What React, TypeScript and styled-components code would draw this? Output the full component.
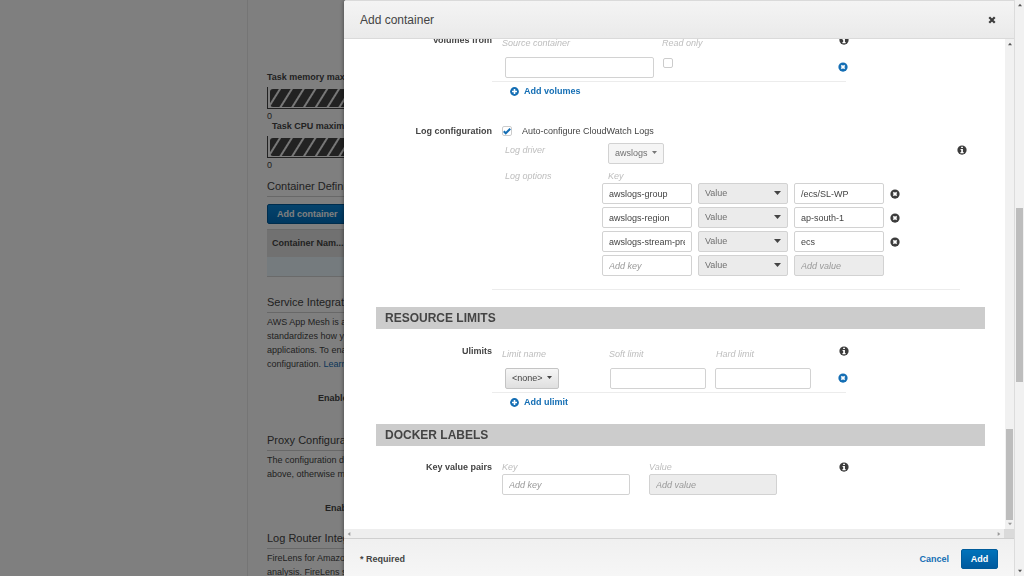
import React from "react";
import styled, { createGlobalStyle, css } from "styled-components";

const GlobalStyle = createGlobalStyle`
  *, *::before, *::after { box-sizing: border-box; }
  body {
    margin: 0;
    background: #fff;
    color: #444;
    font: 9px/14px "Liberation Sans", Arial, sans-serif;
  }
  button, input, select { font: inherit; color: inherit; margin: 0; }
  h1, h2, h3, p { margin: 0; font-weight: normal; }
`;

/* ---------- Page behind the dialog ---------- */

const Page = styled.div`
  display: flex;
  height: 100vh;
  overflow: hidden;
`;

const SideNav = styled.nav`
  flex: 0 0 248px;
  border-right: 1px solid #ebebeb;
`;

const Main = styled.main`
  flex: 1;
  min-width: 0;
  padding: 70px 40px 0 19px;
  white-space: nowrap;
`;

const MeterTitle = styled.div<{ $inset?: boolean }>`
  font-weight: bold;
  padding-left: ${(p) => (p.$inset ? 5 : 0)}px;
`;

const Meter = styled.div`
  height: 22px;
  margin-top: 3px;
  padding: 2px 2px 1px;
  border: solid #444;
  border-width: 0 0 1px 1px;
`;

const MeterFill = styled.div`
  height: 18px;
  border-radius: 3px;
  background: repeating-linear-gradient(122deg, #444 0 7px, #eee 8px 9px, #444 10px);
`;

const MeterScale = styled.div`
  height: 10px;
  line-height: 14px;
`;

const SectionTitle = styled.h2<{ $top: number }>`
  margin-top: ${(p) => p.$top}px;
  padding-bottom: 2px;
  border-bottom: 1px solid #d0d0d0;
  font-size: 11px;
  line-height: 16px;
`;

const Copy = styled.p`
  margin-top: 2px;
`;

const Anchor = styled.a`
  color: #146eb4;
  text-decoration: none;
`;

const EnableLabel = styled.div<{ $indent: number }>`
  margin-top: 20px;
  padding-left: ${(p) => p.$indent}px;
  font-weight: bold;
`;

const blueButton = css`
  height: 20px;
  border: 1px solid #005b9a;
  border-radius: 2px;
  background: linear-gradient(#0073bb, #005a9e);
  color: #fff;
  font-weight: bold;
  line-height: 14px;
  white-space: nowrap;
`;

const AddContainerButton = styled.button`
  ${blueButton}
  display: block;
  margin: 7px 0 5px;
  padding: 0 9px;
  background: linear-gradient(#0a86d8, #0070c0);
`;

const ContainerTable = styled.table`
  width: 100%;
  border-collapse: collapse;
  border: solid #d5d5d5;
  border-width: 1px 0;

  th {
    height: 27px;
    padding: 0 5px;
    background: #e2e2e2;
    text-align: left;
  }
  td {
    height: 20px;
    padding: 0;
    background: #eaf6fc;
  }
`;

/* ---------- Dialog shell ---------- */

const Backdrop = styled.div`
  position: fixed;
  inset: 0;
  display: flex;
  background: rgba(0, 0, 0, 0.5);
`;

const Dialog = styled.section`
  flex: 1;
  min-width: 0;
  margin-left: 344px;
  display: flex;
  flex-direction: column;
  background: #fff;
  border-radius: 3px 0 0 0;
  box-shadow: 0 0 4px rgba(0, 0, 0, 0.5);
  overflow: hidden;
`;

const DialogHeader = styled.header`
  flex: 0 0 39px;
  display: flex;
  align-items: center;
  justify-content: space-between;
  padding: 1px 18px 0 16px;
  border: solid #dadada;
  border-width: 1px 0;
  background: linear-gradient(#f4f4f4, #eaeaea);
`;

const DialogTitle = styled.h1`
  font-size: 12px;
  line-height: 16px;
`;

const IconButton = styled.button<{ $tone?: "blue" }>`
  display: flex;
  padding: 0;
  border: 0;
  background: none;
  color: ${(p) => (p.$tone === "blue" ? "#146eb4" : "#3c3c3c")};
`;

const DialogMiddle = styled.div`
  flex: 1;
  min-height: 0;
  display: flex;
`;

const ScrollArea = styled.div`
  flex: 1;
  min-width: 0;
  display: flex;
  flex-direction: column;
  justify-content: flex-end;
  padding: 0 20px 0 32px;
  overflow: hidden;
`;

const DialogFooter = styled.footer`
  flex: 0 0 38px;
  display: flex;
  align-items: center;
  gap: 12px;
  padding: 3px 16px 0;
  border-top: 1px solid #cfcfcf;
  background: linear-gradient(#f0f0f0, #f6f6f6);
`;

const Required = styled.strong`
  flex: 1;
`;

const CancelButton = styled.button`
  padding: 0;
  border: 0;
  background: none;
  color: #146eb4;
  font-weight: bold;
`;

const AddButton = styled.button`
  ${blueButton}
  width: 37px;
  padding: 0;
`;

/* ---------- Scrollbars ---------- */

const VerticalTrack = styled.div<{ $edge?: boolean }>`
  flex: 0 0 ${(p) => (p.$edge ? 10 : 9)}px;
  display: flex;
  flex-direction: column;
  align-items: center;
  padding: 3px 0;
  background: #f1f1f1;
  border-left: ${(p) => (p.$edge ? "1px solid #dcdcdc" : "0")};
`;

const Thumb = styled.div<{ $grow: number }>`
  flex: ${(p) => p.$grow} 0 0;
  width: 7px;
  background: #bdbdbd;
`;

const Gap = styled.div<{ $grow: number }>`
  flex: ${(p) => p.$grow} 0 0;
`;

const HorizontalTrack = styled.div`
  flex: 0 0 9px;
  display: flex;
  align-items: center;
  justify-content: space-between;
  background: #eee;
`;

const TrackEnd = styled.div`
  display: flex;
  align-items: center;
  gap: 3px;
  height: 9px;
  padding-left: 3px;
`;

const Corner = styled.div`
  width: 10px;
  height: 9px;
  background: #dadada;
`;

/* ---------- Form parts ---------- */

const FormRow = styled.div<{ $top?: number; $bottom: number }>`
  display: flex;
  padding: ${(p) => p.$top ?? 0}px 0 ${(p) => p.$bottom}px;
`;

const RowLabel = styled.div`
  flex: 0 0 116px;
  text-align: right;
  font-weight: bold;
  white-space: nowrap;
`;

const RowBody = styled.div<{ $wide?: boolean }>`
  flex: 0 1 ${(p) => (p.$wide ? 475 : 357)}px;
`;

const GroupTitle = styled.h2`
  height: 22px;
  padding-left: 9px;
  background: #ccc;
  font-size: 12px;
  font-weight: bold;
  line-height: 22px;
`;

const HintRow = styled.div<{ $columns: string }>`
  display: grid;
  grid-template-columns: ${(p) => p.$columns};
  height: 17px;
  padding-left: 10px;
`;

const Hint = styled.span<{ $drop?: boolean }>`
  padding-top: ${(p) => (p.$drop ? 3 : 0)}px;
  color: #bdbdbd;
  font-style: italic;
`;

const InfoSlot = styled.span`
  display: flex;
  justify-self: end;
  height: 14px;
  align-items: center;
`;

const InputRow = styled.div<{ $columns: string }>`
  display: grid;
  grid-template-columns: ${(p) => p.$columns};
  margin-top: 7px;
  padding: 0 1px 0 13px;
`;

const ReadOnlyCell = styled.span`
  padding: 1px 0 0 9px;
`;

const RemoveSlot = styled.span`
  justify-self: end;
  padding-top: 5px;
`;

const TextInput = styled.input`
  width: 100%;
  height: 21px;
  padding: 0 6px;
  border: 1px solid #d2d2d2;
  border-radius: 2px;
  background: #fff;
  outline: 0;

  &::placeholder { color: #999; font-style: italic; opacity: 1; }
  &:disabled { background: #ececec; }
`;

const Rule = styled.hr<{ $top: number; $right?: number }>`
  height: 1px;
  margin: ${(p) => p.$top}px ${(p) => p.$right ?? 3}px 0 0;
  border: 0;
  background: #ececec;
`;

const AddLink = styled.button`
  display: flex;
  align-items: center;
  gap: 5px;
  height: 14px;
  margin: 2px 0 0 18px;
  padding: 0;
  border: 0;
  background: none;
  color: #146eb4;
  font-weight: bold;
`;

const CheckWrap = styled.span`
  position: relative;
  display: flex;
  width: 10px;
  height: 10px;

  svg { position: absolute; left: 1px; top: 1px; pointer-events: none; }
`;

const Check = styled.input`
  appearance: none;
  width: 10px;
  height: 10px;
  border: 1px solid #ccc;
  border-radius: 2px;
  background: #fff;
`;

const CheckLine = styled.label`
  display: flex;
  align-items: center;
  gap: 10px;
  height: 14px;
  padding-left: 10px;
`;

const SelectWrap = styled.span<{ $width: number }>`
  position: relative;
  display: block;
  width: ${(p) => p.$width}px;

  svg {
    position: absolute;
    right: 7px;
    top: 8px;
    pointer-events: none;
  }
`;

const Select = styled.select<{ $look: "flat" | "raised" | "muted" }>`
  appearance: none;
  display: block;
  width: 100%;
  height: 21px;
  padding: 0 6px 2px;
  border: 1px solid ${(p) => (p.$look === "raised" ? "#c4c4c4" : "#d2d2d2")};
  border-radius: 2px;
  background: ${(p) =>
    p.$look === "flat" ? "#ebebeb" : p.$look === "raised" ? "linear-gradient(#f6f6f6, #dfdfdf)" : "#f5f5f5"};
  color: ${(p) => (p.$look === "raised" ? "#444" : "#707070")};
  opacity: 1;
`;

const DriverLine = styled.div`
  display: grid;
  grid-template-columns: 103px 1fr auto;
  align-items: start;
  margin-top: 5px;
  padding-left: 13px;
`;

const OptionsLine = styled.div`
  display: grid;
  grid-template-columns: 97px 1fr;
  margin-top: 5px;
  padding-left: 13px;
`;

const KeyHint = styled(Hint)`
  display: block;
  padding-left: 6px;
`;

const OptionRow = styled.div`
  display: grid;
  grid-template-columns: 90px 90px 90px 10px;
  column-gap: 6px;
  align-items: center;
  margin-bottom: 3px;
`;

const PairFields = styled.div`
  display: grid;
  grid-template-columns: 128px 128px 1fr;
  column-gap: 19px;
  padding-left: 10px;
`;

const PairField = styled.label`
  display: flex;
  flex-direction: column;
`;

/* ---------- Icons ---------- */

const InfoIcon = () => (
  <svg width="10" height="10" viewBox="0 0 16 16" aria-hidden="true">
    <circle cx="8" cy="8" r="7.4" fill="#3c3c3c" />
    <path d="M6.6 2.6h2.9v2.3H6.6zM5.7 6.3h3.8v5h1.1v1.8H5.5v-1.8h1.2V8.1h-1z" fill="#fff" />
  </svg>
);

const RemoveIcon = () => (
  <svg width="10" height="10" viewBox="0 0 16 16" aria-hidden="true">
    <circle cx="8" cy="8" r="7.4" fill="currentColor" />
    <path d="M5.3 5.3l5.4 5.4M10.7 5.3l-5.4 5.4" stroke="#fff" strokeWidth="2.6" />
  </svg>
);

const PlusIcon = () => (
  <svg width="9" height="9" viewBox="0 0 16 16" aria-hidden="true">
    <circle cx="8" cy="8" r="7.8" fill="currentColor" />
    <path d="M8 3.6v8.8M3.6 8h8.8" stroke="#fff" strokeWidth="2.8" />
  </svg>
);

const CloseIcon = () => (
  <svg width="8" height="8" viewBox="0 0 16 16" aria-hidden="true">
    <path d="M2.5 2.5l11 11M13.5 2.5l-11 11" stroke="currentColor" strokeWidth="4.4" />
  </svg>
);

const CheckIcon = () => (
  <svg width="8" height="8" viewBox="0 0 16 16" aria-hidden="true">
    <path d="M1.5 8.5l4 4L14.5 3.5" fill="none" stroke="#146eb4" strokeWidth="4" />
  </svg>
);

const Caret = ({ size = 5, color = "#444" }: { size?: number; color?: string }) => (
  <svg width={size} height={size === 5 ? 3 : 4} viewBox="0 0 10 6" preserveAspectRatio="none" aria-hidden="true">
    <path d="M0 0h10L5 6z" fill={color} />
  </svg>
);

const arrows = { up: "M0 5l3-4 3 4z", down: "M0 1l3 4 3-4z", left: "M5 0L1 3l4 3z", right: "M1 0l4 3-4 3z" };

const Arrow = ({ to, color = "#555" }: { to: keyof typeof arrows; color?: string }) => (
  <svg width="4" height="4" viewBox="0 0 6 6" aria-hidden="true">
    <path d={arrows[to]} fill={color} />
  </svg>
);

/* ---------- Content ---------- */

const logOptions = [
  { key: "awslogs-group", value: "/ecs/SL-WP" },
  { key: "awslogs-region", value: "ap-south-1" },
  { key: "awslogs-stream-prefix", value: "ecs" },
  { key: "", value: "" },
];

function TaskPage() {
  return (
    <Page>
      <SideNav />
      <Main>
        <MeterTitle>Task memory maximum</MeterTitle>
        <Meter><MeterFill /></Meter>
        <MeterScale>0</MeterScale>
        <MeterTitle $inset>Task CPU maximum</MeterTitle>
        <Meter><MeterFill /></Meter>
        <MeterScale>0</MeterScale>
        <SectionTitle $top={10}>Container Definitions</SectionTitle>
        <AddContainerButton type="button">Add container</AddContainerButton>
        <ContainerTable>
          <thead><tr><th>Container Nam...</th></tr></thead>
          <tbody><tr><td /></tr></tbody>
        </ContainerTable>
        <SectionTitle $top={17}>Service Integration</SectionTitle>
        <Copy>
          AWS App Mesh is a<br />
          standardizes how your<br />
          applications. To enable<br />
          configuration. <Anchor href="#learn">Learn more</Anchor>
        </Copy>
        <EnableLabel $indent={51}>Enable</EnableLabel>
        <SectionTitle $top={27}>Proxy Configuration</SectionTitle>
        <Copy>
          The configuration details<br />
          above, otherwise make
        </Copy>
        <EnableLabel $indent={58}>Enable</EnableLabel>
        <SectionTitle $top={15}>Log Router Integration</SectionTitle>
        <Copy>
          FireLens for Amazon<br />
          analysis. FireLens supports
        </Copy>
      </Main>
    </Page>
  );
}

function VolumesFrom() {
  return (
    <FormRow $bottom={26}>
      <RowLabel>Volumes from</RowLabel>
      <RowBody>
        <HintRow $columns="160px 1fr 10px">
          <Hint $drop>Source container</Hint>
          <Hint $drop>Read only</Hint>
          <InfoSlot><InfoIcon /></InfoSlot>
        </HintRow>
        <InputRow $columns="149px 19px 1fr">
          <TextInput aria-label="Source container" />
          <ReadOnlyCell>
            <Check type="checkbox" aria-label="Read only" />
          </ReadOnlyCell>
          <RemoveSlot>
            <IconButton $tone="blue" type="button" aria-label="Remove volume"><RemoveIcon /></IconButton>
          </RemoveSlot>
        </InputRow>
        <Rule $top={3} />
        <AddLink type="button"><PlusIcon />Add volumes</AddLink>
      </RowBody>
    </FormRow>
  );
}

function LogConfiguration() {
  return (
    <FormRow $bottom={17}>
      <RowLabel>Log configuration</RowLabel>
      <RowBody $wide>
        <CheckLine>
          <CheckWrap>
            <Check type="checkbox" defaultChecked />
            <CheckIcon />
          </CheckWrap>
          Auto-configure CloudWatch Logs
        </CheckLine>
        <DriverLine>
          <Hint as="label" htmlFor="log-driver">Log driver</Hint>
          <SelectWrap $width={56}>
            <Select id="log-driver" $look="muted" disabled><option>awslogs</option></Select>
            <Caret color="#777" />
          </SelectWrap>
          <InfoSlot><InfoIcon /></InfoSlot>
        </DriverLine>
        <OptionsLine>
          <Hint>Log options</Hint>
          <div>
            <KeyHint>Key</KeyHint>
            {logOptions.map((option, i) => (
              <OptionRow key={i}>
                <TextInput aria-label="Option key" placeholder="Add key" defaultValue={option.key} />
                <SelectWrap $width={90}>
                  <Select $look="flat" aria-label="Option type"><option>Value</option></Select>
                  <Caret size={7} />
                </SelectWrap>
                <TextInput
                  aria-label="Option value"
                  placeholder="Add value"
                  defaultValue={option.value}
                  disabled={!option.key}
                />
                {option.key && (
                  <IconButton type="button" aria-label="Remove option"><RemoveIcon /></IconButton>
                )}
              </OptionRow>
            ))}
          </div>
        </OptionsLine>
        <Rule $top={10} $right={7} />
      </RowBody>
    </FormRow>
  );
}

function Ulimits() {
  return (
    <FormRow $top={15} $bottom={15}>
      <RowLabel>Ulimits</RowLabel>
      <RowBody>
        <HintRow $columns="107px 107px 1fr 10px">
          <Hint $drop>Limit name</Hint>
          <Hint $drop>Soft limit</Hint>
          <Hint $drop>Hard limit</Hint>
          <InfoSlot><InfoIcon /></InfoSlot>
        </HintRow>
        <InputRow $columns="105px 96px 9px 96px 1fr">
          <SelectWrap $width={54}>
            <Select $look="raised" aria-label="Limit name"><option>&lt;none&gt;</option></Select>
            <Caret />
          </SelectWrap>
          <TextInput aria-label="Soft limit" />
          <span />
          <TextInput aria-label="Hard limit" />
          <RemoveSlot>
            <IconButton $tone="blue" type="button" aria-label="Remove ulimit"><RemoveIcon /></IconButton>
          </RemoveSlot>
        </InputRow>
        <Rule $top={3} />
        <AddLink type="button"><PlusIcon />Add ulimit</AddLink>
      </RowBody>
    </FormRow>
  );
}

function DockerLabels() {
  return (
    <FormRow $top={14} $bottom={34}>
      <RowLabel>Key value pairs</RowLabel>
      <RowBody>
        <PairFields>
          <PairField><Hint>Key</Hint><TextInput placeholder="Add key" /></PairField>
          <PairField><Hint>Value</Hint><TextInput placeholder="Add value" disabled /></PairField>
          <InfoSlot><InfoIcon /></InfoSlot>
        </PairFields>
      </RowBody>
    </FormRow>
  );
}

export default function App() {
  return (
    <>
      <GlobalStyle />
      <TaskPage />
      <Backdrop>
        <Dialog role="dialog" aria-labelledby="dialog-title">
          <DialogHeader>
            <DialogTitle id="dialog-title">Add container</DialogTitle>
            <IconButton type="button" aria-label="Close"><CloseIcon /></IconButton>
          </DialogHeader>
          <DialogMiddle>
            <ScrollArea>
              <VolumesFrom />
              <LogConfiguration />
              <GroupTitle>RESOURCE LIMITS</GroupTitle>
              <Ulimits />
              <GroupTitle>DOCKER LABELS</GroupTitle>
              <DockerLabels />
            </ScrollArea>
            <VerticalTrack>
              <Arrow to="up" />
              <Gap $grow={382} />
              <Thumb $grow={91} />
              <Gap $grow={2} />
              <Arrow to="down" color="#999" />
            </VerticalTrack>
          </DialogMiddle>
          <HorizontalTrack>
            <TrackEnd><Arrow to="left" color="#999" /></TrackEnd>
            <TrackEnd><Arrow to="right" color="#999" /><Corner /></TrackEnd>
          </HorizontalTrack>
          <DialogFooter>
            <Required>* Required</Required>
            <CancelButton type="button">Cancel</CancelButton>
            <AddButton type="button">Add</AddButton>
          </DialogFooter>
        </Dialog>
        <VerticalTrack $edge>
          <Arrow to="up" />
          <Gap $grow={201} />
          <Thumb $grow={174} />
          <Gap $grow={187} />
          <Arrow to="down" />
        </VerticalTrack>
      </Backdrop>
    </>
  );
}
